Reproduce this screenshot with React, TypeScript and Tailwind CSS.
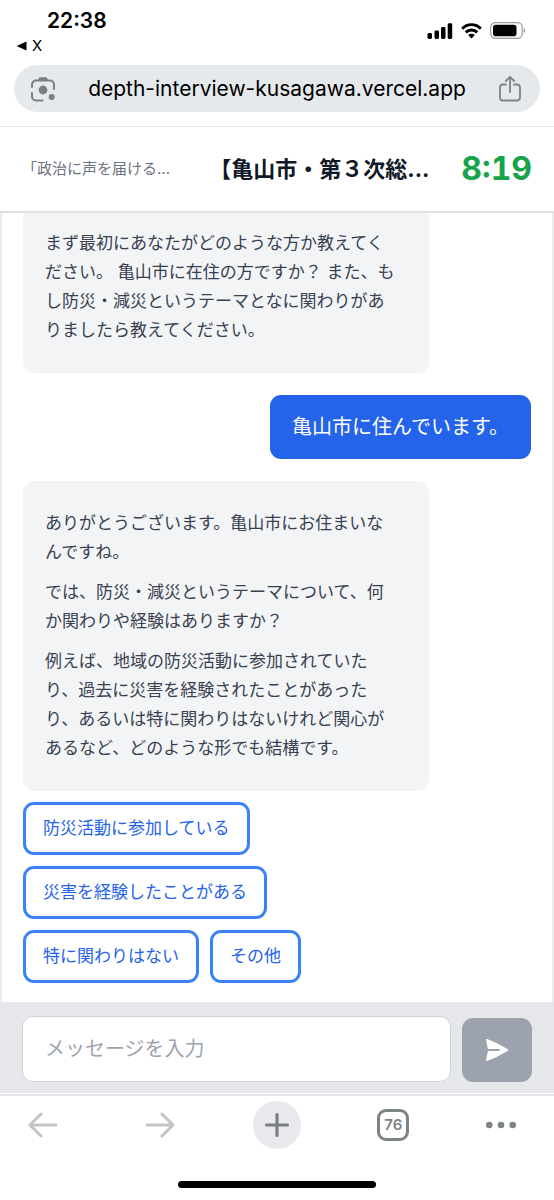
import { useState } from 'react';

interface Message {
  id: number;
  role: 'interviewer' | 'user';
  paragraphs: string[];
}

const messages: Message[] = [
  {
    id: 1,
    role: 'interviewer',
    paragraphs: [
      'まず最初にあなたがどのような方か教えてください。 亀山市に在住の方ですか？ また、もし防災・減災というテーマとなに関わりがありましたら教えてください。',
    ],
  },
  {
    id: 2,
    role: 'user',
    paragraphs: ['亀山市に住んでいます。'],
  },
  {
    id: 3,
    role: 'interviewer',
    paragraphs: [
      'ありがとうございます。亀山市にお住まいなんですね。',
      'では、防災・減災というテーマについて、何か関わりや経験はありますか？',
      '例えば、地域の防災活動に参加されていたり、過去に災害を経験されたことがあったり、あるいは特に関わりはないけれど関心があるなど、どのような形でも結構です。',
    ],
  },
];

const quickReplies = [
  '防災活動に参加している',
  '災害を経験したことがある',
  '特に関わりはない',
  'その他',
];

function StatusBar() {
  return (
    <div className="flex h-[65px] items-start justify-between pl-4 pr-7">
      <div>
        <div className="mt-2 pl-[31px] text-[21px] font-semibold leading-[26px]">22:38</div>
        <div className="flex items-center gap-[5px] text-[15px] leading-6">
          <svg width="11" height="10" viewBox="0 0 11 10" aria-hidden="true">
            <path d="M0.5 5 L10.5 0.5 V9.5 Z" fill="#000" />
          </svg>
          X
        </div>
      </div>
      <div className="mt-[22px] flex items-center gap-2">
        <svg width="26" height="16" viewBox="0 0 26 16" aria-hidden="true">
          <rect x="0.5" y="10" width="4.5" height="6" rx="1.4" />
          <rect x="7.5" y="7.5" width="4.5" height="8.5" rx="1.4" />
          <rect x="14" y="4" width="4.5" height="12" rx="1.4" />
          <rect x="20.7" y="0.3" width="4.5" height="15.7" rx="1.4" />
        </svg>
        <svg width="21" height="16" viewBox="0 0 21 16" aria-hidden="true">
          <g fill="none" stroke="#000" strokeWidth="2.9">
            <path d="M1.2 5.7 C6.4 0.3 14.6 0.3 19.8 5.7" />
            <path d="M4.7 9.4 C8 6.2 13 6.2 16.3 9.4" />
          </g>
          <path d="M7.2 12 C9 10.4 12 10.4 13.8 12 L10.5 15.6 Z" />
        </svg>
        <svg width="36" height="17" viewBox="0 0 36 17" aria-hidden="true">
          <rect x="0.7" y="0.7" width="31.5" height="15.6" rx="4.6" fill="none" stroke="#9a9a9a" strokeWidth="1.2" />
          <rect x="3" y="2.8" width="23.5" height="11.4" rx="2.8" />
          <path d="M33.8 6 C35.6 6.8 35.6 10.2 33.8 11 Z" fill="#8a8a8a" />
        </svg>
      </div>
    </div>
  );
}

function AddressBar() {
  return (
    <div className="border-b border-[#e3e4e6] px-[14px] pb-[14px]">
      <div className="flex h-[47px] items-center justify-between rounded-full bg-[#e6e9ec] pl-4 pr-[18px]">
        <button type="button" aria-label="カメラで検索">
          <svg width="26" height="26" viewBox="0 0 26 26" aria-hidden="true">
            <g fill="none" stroke="#7c8084" strokeWidth="2" strokeLinecap="round">
              <path d="M2 11 V8.5 A4 4 0 0 1 6 4.5 H20 A4 4 0 0 1 24 8.5 V13" />
              <path d="M2 17 V20.5 A4 4 0 0 0 6 24.5 H12.5" />
            </g>
            <path d="M7.5 4.5 L9.5 1.2 H16.5 L18.5 4.5 Z" fill="#7c8084" />
            <circle cx="13" cy="14" r="4.4" fill="#7c8084" />
            <circle cx="21.7" cy="21" r="3" fill="#7c8084" />
          </svg>
        </button>
        <span className="text-[21px] leading-7">depth-interview-kusagawa.vercel.app</span>
        <button type="button" aria-label="共有">
          <svg width="24" height="28" viewBox="0 0 24 28" fill="none" stroke="#808386" strokeWidth="1.8" strokeLinecap="round" strokeLinejoin="round" aria-hidden="true">
            <path d="M8 9.5 H5 A3 3 0 0 0 2 12.5 V22.5 A3 3 0 0 0 5 25.5 H19 A3 3 0 0 0 22 22.5 V12.5 A3 3 0 0 0 19 9.5 H16" />
            <path d="M12 17 V2 M7.8 6 L12 1.8 L16.2 6" />
          </svg>
        </button>
      </div>
    </div>
  );
}

function BrowserToolbar() {
  return (
    <nav className="border-t-2 border-[#e5e7eb] pb-[11px] pt-[5px]">
      <div className="flex items-center justify-between pl-[19px] pr-[38px]">
        <button type="button" aria-label="戻る" className="flex size-12 items-center justify-center">
          <svg width="30" height="26" viewBox="0 0 30 26" fill="none" stroke="#c4c4c4" strokeWidth="3" strokeLinecap="round" strokeLinejoin="round" aria-hidden="true">
            <path d="M28 13 H2 M13 2 L2 13 L13 24" />
          </svg>
        </button>
        <button type="button" aria-label="進む" className="flex size-12 items-center justify-center">
          <svg width="30" height="26" viewBox="0 0 30 26" fill="none" stroke="#c4c4c4" strokeWidth="3" strokeLinecap="round" strokeLinejoin="round" aria-hidden="true">
            <path d="M2 13 H28 M17 2 L28 13 L17 24" />
          </svg>
        </button>
        <button type="button" aria-label="新しいタブ" className="flex size-12 items-center justify-center rounded-full bg-[#e8e9ed]">
          <svg width="26" height="26" viewBox="0 0 26 26" stroke="#7a7e80" strokeWidth="3.2" strokeLinecap="round" aria-hidden="true">
            <path d="M13 2.5 V23.5 M2.5 13 H23.5" />
          </svg>
        </button>
        <button type="button" aria-label="タブ一覧" className="flex size-12 items-center justify-center">
          <span className="flex size-8 items-center justify-center rounded-[9px] border-[3px] border-[#7c8484] text-[15px] font-semibold text-[#7c8484]">
            76
          </span>
        </button>
        <button type="button" aria-label="メニュー" className="flex h-12 items-center">
          <svg width="30" height="8" viewBox="0 0 30 8" fill="#7c8484" aria-hidden="true">
            <circle cx="3.3" cy="4" r="3.3" />
            <circle cx="15" cy="4" r="3.3" />
            <circle cx="26.7" cy="4" r="3.3" />
          </svg>
        </button>
      </div>
      <div className="mx-auto mt-8 h-[7px] w-[198px] rounded-full bg-black" />
    </nav>
  );
}

export default function App() {
  const [draft, setDraft] = useState('');

  return (
    <div className="bg-white font-['Inter','Noto_Sans_CJK_JP',sans-serif] text-black" lang="ja">
      <StatusBar />
      <AddressBar />

      {/* Interview header */}
      <header className="flex h-[86px] items-center justify-between border-b-2 border-[#dfe1e5] px-[22px]">
        <p className="whitespace-nowrap text-[15px] text-[#6b7280]">「政治に声を届ける...</p>
        <h1 className="ml-auto whitespace-nowrap text-[22px] font-bold text-[#111827]">【亀山市・第３次総...</h1>
        <span className="ml-8 text-[32px] font-bold tabular-nums text-[#16a34a]">8:19</span>
      </header>

      {/* Conversation */}
      <main className="border-x-2 border-[#ebecee] px-[21px] pb-[19px]">
        <div className="flex flex-col gap-[22px]">
          {messages.map((message, index) =>
            message.role === 'user' ? (
              <div
                key={message.id}
                className="self-end rounded-[11px] bg-[#2563eb] px-[22px] py-[17px] text-[20px] leading-[30px] text-white"
              >
                {message.paragraphs[0]}
              </div>
            ) : (
              <div
                key={message.id}
                className={`flex w-4/5 flex-col gap-[11px] bg-[#f3f4f6] pb-7 pl-[22px] pr-[30px] text-[17px] leading-[29px] text-[#374151] ${
                  index === 0 ? 'rounded-b-[11px] pt-4' : 'rounded-[11px] pt-7'
                }`}
              >
                {message.paragraphs.map((text) => (
                  <p key={text}>{text}</p>
                ))}
              </div>
            )
          )}
        </div>

        <div className="mt-[11px] flex flex-wrap gap-[11px] pr-[100px]">
          {quickReplies.map((reply) => (
            <button
              key={reply}
              type="button"
              onClick={() => setDraft(reply)}
              className="h-[53px] rounded-[11px] border-[3px] border-[#3b82f6] px-[17px] text-[17px] text-[#2563eb]"
            >
              {reply}
            </button>
          ))}
        </div>
      </main>

      {/* Message form */}
      <form
        className="flex items-end gap-[11px] bg-[#e5e7eb] px-[22px] pb-[11px] pt-[14px]"
        onSubmit={(e) => e.preventDefault()}
      >
        <input
          type="text"
          aria-label="メッセージ"
          placeholder="メッセージを入力"
          value={draft}
          onChange={(e) => setDraft(e.target.value)}
          className="h-[66px] min-w-0 flex-1 rounded-[11px] border border-[#d1d5db] bg-white px-[22px] text-[20px] placeholder:text-[#9ca3af]"
        />
        <button
          type="submit"
          aria-label="送信"
          className="flex h-16 w-[70px] items-center justify-center rounded-[11px] bg-[#9ca3af]"
        >
          <svg width="24" height="24" viewBox="0 0 24 24" aria-hidden="true">
            <path d="M1.8 1.8 Q12 5.5 22.5 12 Q12 18.5 1.8 22.2 L4 12 Z" fill="#fff" stroke="#fff" strokeWidth="1.6" strokeLinejoin="round" />
            <path d="M3.5 12 H14" stroke="#9ca3af" strokeWidth="1.8" strokeLinecap="round" />
          </svg>
        </button>
      </form>

      <div className="h-px bg-white" />
      <BrowserToolbar />
    </div>
  );
}
